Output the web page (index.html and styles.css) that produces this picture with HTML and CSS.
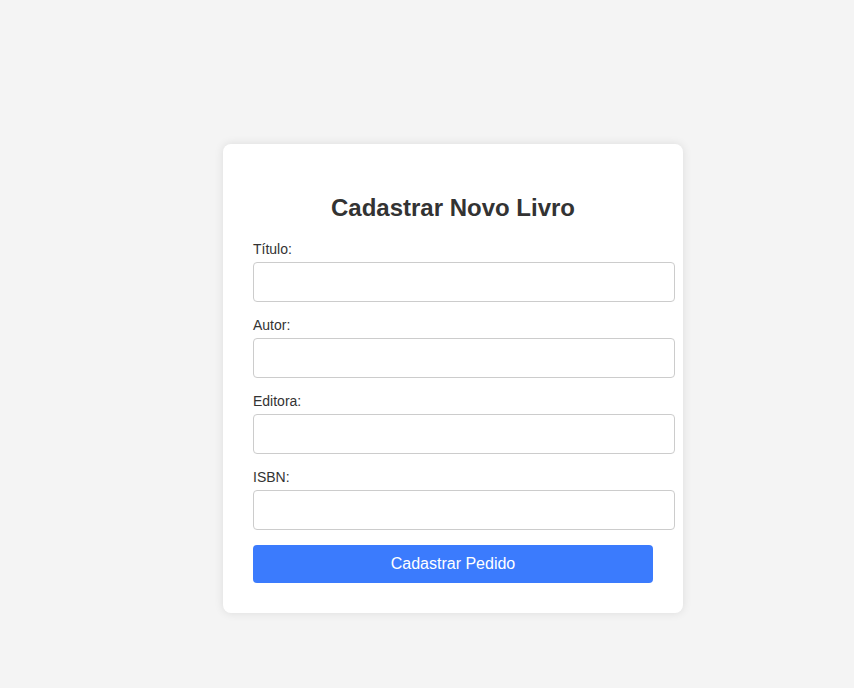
FILE: index.html
```html
<!DOCTYPE html>
<html lang="pt">
<head>
<meta charset="utf-8">
<title>Cadastrar Novo Livro</title>
<link rel="stylesheet" href="styles.css">
</head>
<body>
<div class="page">
  <div class="card">
    <h2 class="title">Cadastrar Novo Livro</h2>
    <form class="form">
      <label class="label" for="titulo">Título:</label>
      <input class="input" id="titulo" type="text">
      <label class="label" for="autor">Autor:</label>
      <input class="input" id="autor" type="text">
      <label class="label" for="editora">Editora:</label>
      <input class="input" id="editora" type="text">
      <label class="label" for="isbn">ISBN:</label>
      <input class="input" id="isbn" type="text">
      <button class="button" type="button">Cadastrar Pedido</button>
    </form>
  </div>
</div>
</body>
</html>
```
FILE: styles.css
```css
html, body {
  margin: 0;
  padding: 0;
  background: #f4f4f4;
  font-family: "Liberation Sans", Arial, sans-serif;
}
.page {
  padding: 144px 0 0 223px;
  min-height: 100vh;
  box-sizing: border-box;
}
.card {
  width: 400px;
  padding: 30px;
  background: #fff;
  border-radius: 8px;
  box-shadow: 0 0 10px rgba(0, 0, 0, 0.1);
}
.title {
  margin: 20px 0;
  text-align: center;
  font-size: 24px;
  line-height: 27px;
  font-weight: bold;
  color: #333;
}
.form {
  margin: 0;
}
.label {
  display: block;
  font-size: 14px;
  line-height: 16px;
  color: #333;
  margin-bottom: 5px;
}
.input {
  display: block;
  width: 100%;
  padding: 10px;
  margin: 0 0 15px 0;
  border: 1px solid #ccc;
  border-radius: 4px;
  font-size: 16px;
  line-height: 18px;
  font-family: "Liberation Sans", Arial, sans-serif;
  background: #fff;
}
.button {
  display: block;
  width: 100%;
  padding: 10px;
  border: none;
  border-radius: 4px;
  background: #3b7bfd;
  color: #fff;
  font-size: 16px;
  line-height: 18px;
  font-family: "Liberation Sans", Arial, sans-serif;
  cursor: pointer;
}
```
